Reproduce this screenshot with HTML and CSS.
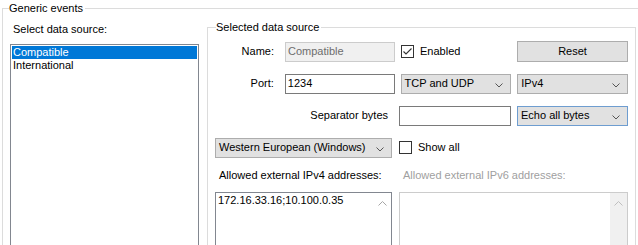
FILE: index.html
```html
<!DOCTYPE html>
<html lang="en">
<head>
  <meta charset="UTF-8">
  <title>Generic events</title>
  <link rel="stylesheet" href="styles.css">
</head>
<body>
  <fieldset class="group outer">
    <legend>Generic events</legend>
    <div class="outer-body">
      <div class="source-col">
        <div class="source-label">Select data source:</div>
        <ul class="listbox">
          <li class="selected">Compatible</li>
          <li>International</li>
        </ul>
      </div>

      <fieldset class="group inner">
        <legend>Selected data source</legend>

        <div class="row">
          <span class="label">Name:</span>
          <span class="textbox disabled w110">Compatible</span>
          <span class="check"><span class="box checked"><svg width="11" height="11" viewBox="0 0 11 11"><path d="M1.5 5.5 L4 8 L9.5 2.5" fill="none" stroke="#333" stroke-width="1.1"/></svg></span>Enabled</span>
          <span class="button">Reset</span>
        </div>

        <div class="row">
          <span class="label">Port:</span>
          <span class="textbox w110">1234</span>
          <span class="combo w111 ml6">TCP and UDP<svg class="chev" width="8" height="5" viewBox="0 0 8 5"><path d="M0.5 0.5 L4 4 L7.5 0.5" fill="none" stroke="#555"/></svg></span>
          <span class="combo w111 ml6">IPv4<svg class="chev" width="8" height="5" viewBox="0 0 8 5"><path d="M0.5 0.5 L4 4 L7.5 0.5" fill="none" stroke="#555"/></svg></span>
        </div>

        <div class="row">
          <span class="label wide">Separator bytes</span>
          <span class="textbox w112"></span>
          <span class="combo focus w111 ml6">Echo all bytes<svg class="chev" width="8" height="5" viewBox="0 0 8 5"><path d="M0.5 0.5 L4 4 L7.5 0.5" fill="none" stroke="#555"/></svg></span>
        </div>

        <div class="row">
          <span class="combo w177">Western European (Windows)<svg class="chev" width="8" height="5" viewBox="0 0 8 5"><path d="M0.5 0.5 L4 4 L7.5 0.5" fill="none" stroke="#555"/></svg></span>
          <span class="check ml7"><span class="box"></span>Show all</span>
        </div>

        <div class="addr">
          <div class="addr-col w177">
            <div class="addr-label">Allowed external IPv4 addresses:</div>
            <div class="memo">
              <span class="memo-text">172.16.33.16;10.100.0.35</span>
              <span class="scroll"><svg width="9" height="5" viewBox="0 0 9 5"><path d="M0.5 4.5 L4.5 0.5 L8.5 4.5" fill="none" stroke="#a6a6a6"/></svg></span>
            </div>
          </div>
          <div class="addr-col w229 ml7 off">
            <div class="addr-label">Allowed external IPv6 addresses:</div>
            <div class="memo">
              <span class="memo-text"></span>
              <span class="scroll grey"><svg width="9" height="5" viewBox="0 0 9 5"><path d="M0.5 4.5 L4.5 0.5 L8.5 4.5" fill="none" stroke="#bfbfbf"/></svg></span>
            </div>
          </div>
        </div>
      </fieldset>
    </div>
  </fieldset>
</body>
</html>
```

FILE: styles.css
```css
* {
  box-sizing: border-box;
}

body {
  margin: 0;
  background: #fff;
  color: #000;
  font-family: 'Liberation Sans', Arial, sans-serif;
  font-size: 11px;
  line-height: 13px;
  overflow: hidden;
}

.group {
  border: 1px solid #dcdcdc;
  margin: 0;
  min-width: 0;
}

.group legend {
  padding: 0 2px 0 0;
  line-height: 13px;
}

.outer {
  margin: 2px 0 0 2px;
  width: 660px;
  height: 260px;
  padding: 0 0 0 7px;
}

.outer legend {
  margin-left: -1px;
}

.outer-body {
  display: flex;
  align-items: flex-start;
}

.source-col {
  width: 189px;
}

.source-label {
  padding: 8px 0 0 3px;
  height: 29px;
}

.listbox {
  list-style: none;
  margin: 0;
  padding: 1px;
  height: 220px;
  border: 1px solid #828790;
}

.listbox li {
  height: 13px;
  padding-left: 1px;
}

.listbox li.selected {
  background: #0078d7;
  color: #fff;
}

.inner {
  margin: 6px 0 0 8px;
  width: 429px;
  height: 240px;
  padding: 7px 7px 0 7px;
}

.inner legend {
  margin-left: 1px;
}

.row {
  display: flex;
  align-items: center;
  height: 21px;
  margin-bottom: 11px;
}

.label {
  width: 70px;
  padding-right: 11px;
  text-align: right;
}

.label.wide {
  width: 184px;
  padding-right: 11px;
}

.textbox,
.combo,
.button {
  display: flex;
  align-items: center;
  height: 20px;
  white-space: nowrap;
}

.textbox {
  border: 1px solid #7a7a7a;
  background: #fff;
  padding-left: 2px;
}

.textbox.disabled {
  border-color: #cccccc;
  background: #f0f0f0;
  color: #6d6d6d;
}

.combo {
  position: relative;
  border: 1px solid #adadad;
  background: #e1e1e1;
  padding-left: 3px;
}

.combo.focus {
  border-color: #6e9dd0;
}

.chev {
  position: absolute;
  right: 7px;
  top: 8px;
}

.button {
  margin-left: auto;
  width: 111px;
  height: 21px;
  justify-content: center;
  border: 1px solid #adadad;
  background: #e1e1e1;
}

.check {
  display: flex;
  align-items: center;
  margin-left: 6px;
}

.box {
  display: inline-block;
  width: 13px;
  height: 13px;
  border: 1px solid #333;
  background: #fff;
  margin-right: 6px;
}

.box svg {
  display: block;
}

.w110 { width: 110px; }
.w111 { width: 111px; }
.w112 { width: 112px; }
.w177 { width: 177px; }
.w229 { width: 229px; }
.ml6 { margin-left: 6px; }
.ml7 { margin-left: 7px; }

.addr {
  display: flex;
  margin-top: 11px;
}

.addr-label {
  padding-left: 4px;
  height: 23px;
}

.off .addr-label {
  color: #a0a0a0;
}

.memo {
  display: flex;
  height: 60px;
  border: 1px solid #828790;
}

.off .memo {
  border-color: #cccccc;
}

.memo-text {
  flex: 1;
  padding: 1px 0 0 2px;
}

.scroll {
  width: 17px;
  display: flex;
  justify-content: center;
  padding-top: 8px;
}

.scroll.grey {
  background: #f0f0f0;
}

.scroll svg {
  display: block;
}
```
